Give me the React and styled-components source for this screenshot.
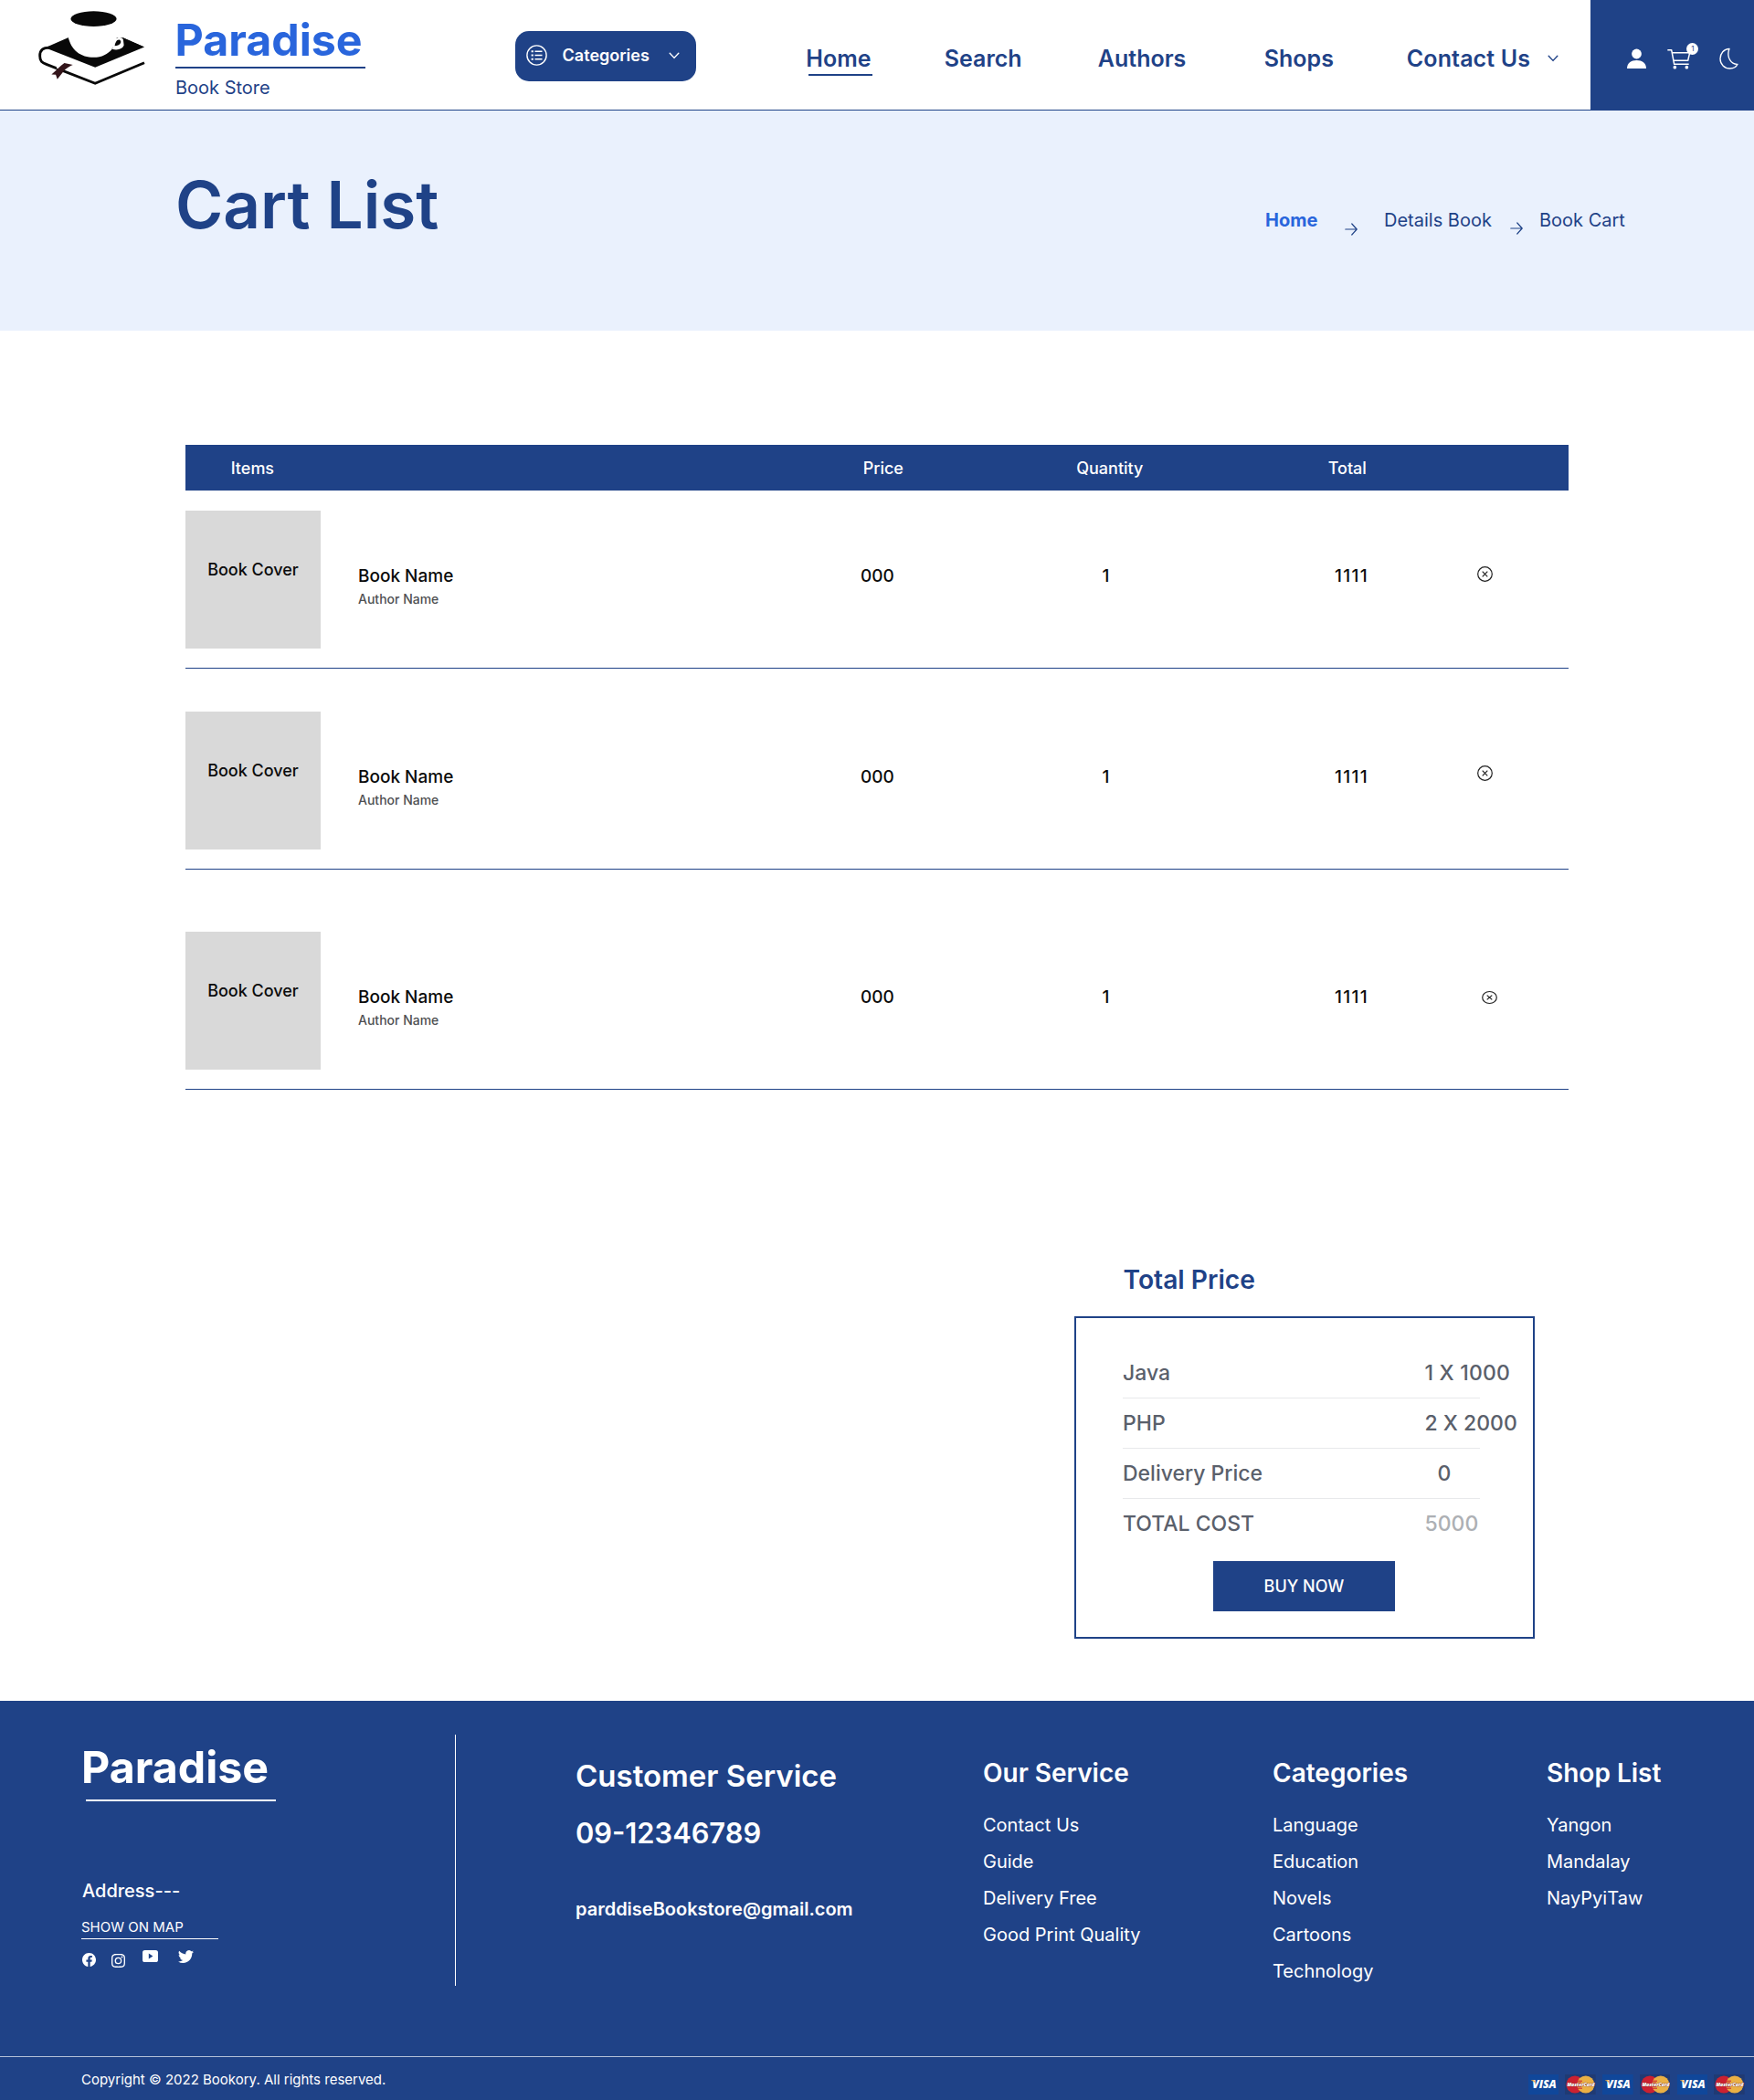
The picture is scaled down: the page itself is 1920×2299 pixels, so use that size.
import React from "react";
import styled, { createGlobalStyle } from "styled-components";
import { BsFacebook, BsInstagram, BsTwitter } from "react-icons/bs";

const navy = "#1f4287";

const GlobalStyle = createGlobalStyle`
  * { box-sizing: border-box; }
  body { margin: 0; background: #fff; }
  h1, h2, h3, p, ul { margin: 0; padding: 0; font-weight: inherit; }
  ul { list-style: none; }
  svg { display: block; }
  button { border: 0; margin: 0; padding: 0; font-family: inherit; background: none; }
`;

const Page = styled.div`
  width: 1920px;
  font-family: Inter, "Liberation Sans", sans-serif;
  color: ${navy};
  white-space: nowrap;
`;

/* ---------- header ---------- */
const Header = styled.header`
  display: flex;
  align-items: flex-start;
  height: 121px;
  padding-left: 42px;
  border-bottom: 1px solid ${navy};
`;
const LogoMark = styled.svg`
  width: 117px;
  height: 81px;
  margin-top: 12px;
  flex: none;
`;
const Brand = styled.div`
  width: 208px;
  margin: 14px 0 0 33px;
`;
const BrandName = styled.div`
  margin-left: -0.5px;
  font-size: 48.3px;
  font-weight: 700;
  line-height: 59px;
  color: #2965dc;
`;
const BrandTag = styled.div`
  padding-top: 9px;
  border-top: 2px solid ${navy};
  font-size: 20px;
  line-height: 24px;
`;
const CategoryButton = styled.button`
  display: flex;
  align-items: center;
  width: 199px;
  height: 54.6px;
  margin: 34px 0 0 164px;
  padding: 0 0 1px 12px;
  border-radius: 15px;
  background: ${navy};
  color: #fff;
  font-size: 18px;
  font-weight: 600;
  svg:last-child { margin-left: 21px; }
`;
const CategoryLabel = styled.span`
  width: 95px;
  margin-left: 17px;
`;
const Nav = styled.nav`
  display: grid;
  grid-template-columns: 151.5px 168px 182px 156px 201.5px;
  margin: 49px 0 0 120px;
  font-size: 25px;
  font-weight: 600;
  line-height: 30px;
`;
const NavItem = styled.a`
  display: flex;
  align-items: center;
  align-self: start;
  gap: 19px;
  height: 30px;
  letter-spacing: ${(p) => p.$track || 0}px;
`;
const ActiveItem = styled.a`
  &::after {
    content: "";
    display: block;
    width: 70px;
    height: 2px;
    margin: 2px 0 0 3px;
    background: ${navy};
  }
`;
const Account = styled.div`
  display: flex;
  align-items: flex-start;
  width: 179px;
  height: 120px;
  padding: 46px 0 0 40px;
  background: ${navy};
`;
const UserSlot = styled.div`
  margin: 7px 23px 0 0;
`;
const CartSlot = styled.div`
  position: relative;
  margin-right: 22px;
`;
const MoonSlot = styled.div`
  margin-top: 6px;
`;
const Badge = styled.span`
  position: absolute;
  top: 1px;
  left: 21px;
  width: 13px;
  height: 13px;
  border-radius: 50%;
  background: #fff;
  color: ${navy};
  font-size: 8px;
  line-height: 13px;
  text-align: center;
`;

/* ---------- hero ---------- */
const Hero = styled.section`
  display: flex;
  align-items: flex-start;
  height: 241px;
  padding: 60px 0 0 192px;
  background: #eaf1fd;
`;
const Title = styled.h1`
  width: 1193px;
  font-size: 71px;
  font-weight: 600;
  line-height: 86px;
`;
const Crumbs = styled.div`
  display: grid;
  grid-template-columns: 87px 43px 138px 32px auto;
  margin-top: 47.5px;
  font-size: 20px;
  line-height: 24px;
`;
const CrumbHome = styled.a`
  font-weight: 700;
  color: #2965dc;
`;
const CrumbArrow = styled.svg`
  width: 14px;
  height: 14px;
  margin-top: ${(p) => p.$drop}px;
`;

/* ---------- cart table ---------- */
const Cart = styled.section`
  width: 1514px;
  margin: 125px 0 0 203px;
`;
const HeadRow = styled.div`
  display: grid;
  grid-template-columns: 692px 233.5px 275.5px auto;
  height: 50px;
  padding-left: 49.7px;
  background: ${navy};
  color: #fff;
  font-size: 18px;
  font-weight: 500;
  line-height: 51px;
`;
const ItemRow = styled.div`
  display: grid;
  grid-template-columns: 189px 550px 264.5px 254.5px 156px auto;
  align-items: start;
  height: 173px;
  margin-top: ${(p) => p.$gap}px;
  border-bottom: 1px solid ${navy};
  color: #0b0b0b;
`;
const Cover = styled.div`
  width: 148px;
  height: 150.5px;
  padding-top: 53.5px;
  background: #d9d9d9;
  font-size: 18px;
  font-weight: 500;
  line-height: 22px;
  text-align: center;
`;
const ItemText = styled.div`
  padding-top: 60px;
  font-size: 19px;
  font-weight: 500;
  line-height: 24px;
  letter-spacing: ${(p) => p.$track || 0}px;
`;
const Author = styled.div`
  margin-top: 4px;
  font-size: 14px;
  line-height: 18px;
  color: #4f5052;
`;
const RemoveButton = styled.button`
  width: 17px;
  margin: ${(p) => p.$top}px 0 0 ${(p) => p.$left}px;
`;

/* ---------- price summary ---------- */
const Summary = styled.section`
  width: 504px;
  margin: 191px 0 68px 1176px;
`;
const SummaryTitle = styled.h2`
  margin: 0 0 23px 53.5px;
  font-size: 28.2px;
  font-weight: 600;
  line-height: 34px;
`;
const SummaryBox = styled.div`
  height: 353px;
  padding: 33px 0 0 51px;
  border: 2px solid ${navy};
`;
const PriceRow = styled.div`
  display: grid;
  grid-template-columns: 330.5px auto;
  width: 391px;
  height: 55px;
  border-bottom: 1px solid ${(p) => (p.$last ? "transparent" : "#e8e9eb")};
  color: #5a606b;
  font-size: 23px;
  font-weight: 500;
  line-height: 54px;
`;
const PriceValue = styled.span`
  padding-left: ${(p) => p.$indent || 0}px;
  letter-spacing: ${(p) => p.$track || 0}px;
  color: ${(p) => (p.$muted ? "#adb0b4" : "inherit")};
`;
const BuyButton = styled.button`
  display: block;
  width: 199px;
  height: 54.6px;
  margin: 13px 0 0 99px;
  background: ${navy};
  color: #fff;
  font-size: 18px;
  font-weight: 500;
`;

/* ---------- footer ---------- */
const Footer = styled.footer`
  height: 437px;
  background: ${navy};
  color: #fff;
`;
const FooterMain = styled.div`
  display: grid;
  grid-template-columns: 498px 132px 446px 317px 300px auto;
  align-items: start;
  height: 390px;
  border-bottom: 1px solid #b4c0d8;
`;
const FooterBrand = styled.div`
  padding: 43px 0 0 89px;
`;
const FooterName = styled.div`
  font-size: 48.3px;
  font-weight: 700;
  line-height: 59px;
`;
const NameRule = styled.div`
  width: 208px;
  height: 2px;
  margin: 6px 0 0 5px;
  background: #fff;
`;
const Address = styled.div`
  margin: 86px 0 0 1px;
  font-size: 20px;
  font-weight: 500;
  line-height: 24px;
`;
const MapLink = styled.a`
  display: block;
  width: 150px;
  height: 24px;
  margin-top: 17px;
  border-bottom: 1px solid #fff;
  font-size: 15px;
  font-weight: 400;
  line-height: 21px;
`;
const Socials = styled.div`
  display: flex;
  align-items: flex-start;
  margin: 10px 0 0 1px;
`;
const Social = styled.a`
  width: ${(p) => p.$width}px;
  padding-top: ${(p) => p.$drop}px;
`;
const Divider = styled.div`
  width: 1px;
  height: 275px;
  margin-top: 37px;
  background: #fff;
`;
const Contact = styled.div`
  padding-top: 62px;
  font-weight: 600;
`;
const ContactTitle = styled.h3`
  font-size: 33px;
  line-height: 40px;
`;
const Phone = styled.p`
  margin-top: 24px;
  font-size: 30.8px;
  line-height: 38px;
`;
const Email = styled.p`
  margin-top: 51.5px;
  font-size: 20px;
  line-height: 24px;
`;
const LinkColumn = styled.div`
  padding-top: 62px;
`;
const LinkTitle = styled.h3`
  margin-bottom: 20px;
  font-size: 28px;
  font-weight: 600;
  line-height: 34px;
`;
const FooterLink = styled.li`
  font-size: 20px;
  line-height: 40px;
`;
const FooterBar = styled.div`
  display: flex;
  justify-content: space-between;
  align-items: flex-start;
  height: 47px;
  padding: 16px 10px 0 89px;
`;
const Copyright = styled.p`
  font-size: 15px;
  line-height: 18px;
`;
const Cards = styled.div`
  display: flex;
  gap: 7.2px;
  margin-top: 3px;
`;
const CardMark = styled.svg`
  width: 33.6px;
  height: 22px;
`;

/* ---------- drawings ---------- */
const Logo = () => (
  <LogoMark viewBox="66 36 350 244" preserveAspectRatio="none">
    <ellipse cx="247" cy="62" rx="75" ry="25" fill="#080808" />
    <path d="M165 123 L88 157 L252 222 L413 155 L343 124 Z" fill="#080808" />
    <path d="M163 118 C172 166 205 189 247 189 C274 189 294 177 306 163 C316 148 321 136 324 118 Z" fill="#fff" />
    <path d="M317 130 C335 114 352 130 347 147 C342 162 325 167 308 162 Z" fill="#fff" />
    <path d="M343 124 L413 155 L346 148 Z" fill="#080808" />
    <path d="M316 151 C318 138 325 128 333 132 C341 139 333 151 316 151 Z" fill="#080808" />
    <path d="M108 157 C80 155 71 166 71 184 C71 202 78 207 92 212 L252 275 L413 207" fill="none" stroke="#080808" strokeWidth="8.5" />
    <path d="M127 219 L137 223" stroke="#fff" strokeWidth="12" />
    <path d="M151 208 L179 214 C163 221 154 228 144 241 L128 261 L123 246 L109 245 C126 232 136 218 151 208 Z" fill="#33151a" />
  </LogoMark>
);

const ListIcon = () => (
  <svg width="23" height="23" viewBox="0 0 23 23" fill="none" stroke="#fff">
    <circle cx="11.5" cy="11.5" r="10.6" strokeWidth="1.4" />
    <path d="M9.5 7.2H17.5M9.5 11.5H17.5M9.5 15.8H17.5" strokeWidth="1.5" />
    <path d="M5.6 7.2H7.8M5.6 11.5H7.8M5.6 15.8H7.8" strokeWidth="2" />
  </svg>
);

const Chevron = ({ color }) => (
  <svg width="12" height="8" viewBox="0 0 12 8" fill="none" stroke={color} strokeWidth="1.4" strokeLinecap="round" strokeLinejoin="round">
    <path d="M1.2 1.2 L6 6.4 L10.8 1.2" />
  </svg>
);

const UserIcon = () => (
  <svg width="21" height="22" viewBox="0 0 21 22" fill="#fff">
    <circle cx="10.5" cy="6" r="5.4" />
    <path d="M0 22 C0 16 4.5 13 10.5 13 S21 16 21 22 Z" />
  </svg>
);

const CartIcon = () => (
  <svg width="35" height="31" viewBox="315 78 105 93" fill="none" stroke="#fff" strokeWidth="4.5" strokeLinejoin="round">
    <path d="M316 104 H329 L338 151 H386" />
    <path d="M331 113 H389 L383 139 H336" />
    <circle cx="340" cy="161" r="5.5" fill="#fff" stroke="none" />
    <circle cx="379" cy="161" r="5.5" fill="#fff" stroke="none" />
  </svg>
);

const MoonIcon = () => (
  <svg width="21" height="24" viewBox="487 96 63 72" fill="none" stroke="#fff" strokeWidth="4" strokeLinejoin="round">
    <path d="M520 100 C502 101 490 115 490 133 C490 151 504 165 522 165 C533 165 543 160 547 151 C527 152 509 130 520 100 Z" />
  </svg>
);

const Arrow = ({ drop }) => (
  <CrumbArrow $drop={drop} viewBox="0 0 14 14" fill="none" stroke={navy} strokeWidth="1.2" strokeLinecap="round" strokeLinejoin="round">
    <path d="M0.8 7 H13 M7.8 1 L13.2 7 L7.8 13" />
  </CrumbArrow>
);

const RemoveIcon = ({ height }) => (
  <svg width="17" height={height} viewBox="0 0 17 17" preserveAspectRatio="none" fill="none" stroke="#222" strokeWidth="1.2">
    <circle cx="8.5" cy="8.5" r="7.8" />
    <path d="M5.7 5.7 L11.3 11.3 M11.3 5.7 L5.7 11.3" />
  </svg>
);

const YoutubeIcon = () => (
  <svg width="17" height="13" viewBox="0 0 17 13">
    <rect width="17" height="13" rx="2.6" fill="#fff" />
    <path d="M6.8 3.5 L11.4 6.5 L6.8 9.5 Z" fill={navy} />
  </svg>
);

const Visa = () => (
  <CardMark viewBox="0 0 33.6 22">
    <rect width="33.6" height="22" fill="#10479a" />
    <text x="4.2" y="15.4" fill="#fff" fontFamily="Open Sans, sans-serif" fontSize="12" fontWeight="800" fontStyle="italic" textLength="26.5" lengthAdjust="spacingAndGlyphs">VISA</text>
    <path d="M3 6.2 H6.4 L8 10.2 C7 8.6 5.4 7.3 3 6.6 Z" fill="#eda63a" />
  </CardMark>
);

const MasterCard = () => (
  <CardMark viewBox="0 0 33.6 22">
    <rect width="33.6" height="22" fill="#203a73" />
    <circle cx="11" cy="11" r="9.6" fill="#cc2131" />
    <circle cx="22.8" cy="11" r="9.6" fill="#eab044" />
    <path d="M14 7.2H19M13.4 9.2H18M13.4 13.2H18M14 15.2H19" stroke="#cc2131" strokeWidth="1" />
    <text x="2.4" y="13" fill="#fff" stroke="#7b3030" strokeWidth="0.7" paintOrder="stroke" fontFamily="Open Sans, sans-serif" fontSize="5.2" fontWeight="800" fontStyle="italic">MasterCard</text>
  </CardMark>
);

/* ---------- data ---------- */
const items = [
  { gap: 22, top: 61, left: 0, iconHeight: 17 },
  { gap: 47, top: 59, left: 0, iconHeight: 17 },
  { gap: 68, top: 65, left: 5, iconHeight: 14 },
];

const prices = [
  { label: "Java", value: "1 X 1000", track: 0.2 },
  { label: "PHP", value: "2 X 2000" },
  { label: "Delivery Price", value: "0", indent: 14 },
  { label: "TOTAL COST", value: "5000", muted: true },
];

const linkColumns = [
  { title: "Our Service", links: ["Contact Us", "Guide", "Delivery Free", "Good Print Quality"] },
  { title: "Categories", links: ["Language", "Education", "Novels", "Cartoons", "Technology"] },
  { title: "Shop List", links: ["Yangon", "Mandalay", "NayPyiTaw"] },
];

export default function App() {
  return (
    <Page>
      <GlobalStyle />
      <Header>
        <Logo />
        <Brand>
          <BrandName>Paradise</BrandName>
          <BrandTag>Book Store</BrandTag>
        </Brand>
        <CategoryButton>
          <ListIcon />
          <CategoryLabel>Categories</CategoryLabel>
          <Chevron color="#fff" />
        </CategoryButton>
        <Nav>
          <ActiveItem>Home</ActiveItem>
          <NavItem>Search</NavItem>
          <NavItem>Authors</NavItem>
          <NavItem>Shops</NavItem>
          <NavItem $track={0.12}>
            Contact Us
            <Chevron color={navy} />
          </NavItem>
        </Nav>
        <Account>
          <UserSlot><UserIcon /></UserSlot>
          <CartSlot>
            <CartIcon />
            <Badge>1</Badge>
          </CartSlot>
          <MoonSlot><MoonIcon /></MoonSlot>
        </Account>
      </Header>

      <Hero>
        <Title>Cart List</Title>
        <Crumbs>
          <CrumbHome>Home</CrumbHome>
          <Arrow drop={15.5} />
          <span>Details Book</span>
          <Arrow drop={14.5} />
          <span>Book Cart</span>
        </Crumbs>
      </Hero>

      <Cart>
        <HeadRow>
          <span>Items</span>
          <span>Price</span>
          <span>Quantity</span>
          <span>Total</span>
        </HeadRow>
        {items.map((item, i) => (
          <ItemRow key={i} $gap={item.gap}>
            <Cover>Book Cover</Cover>
            <ItemText>
              Book Name
              <Author>Author Name</Author>
            </ItemText>
            <ItemText>000</ItemText>
            <ItemText>1</ItemText>
            <ItemText $track={1.4}>1111</ItemText>
            <RemoveButton $top={item.top} $left={item.left}>
              <RemoveIcon height={item.iconHeight} />
            </RemoveButton>
          </ItemRow>
        ))}
      </Cart>

      <Summary>
        <SummaryTitle>Total Price</SummaryTitle>
        <SummaryBox>
          {prices.map((row, i) => (
            <PriceRow key={row.label} $last={i === prices.length - 1}>
              <span>{row.label}</span>
              <PriceValue $indent={row.indent} $muted={row.muted} $track={row.track}>{row.value}</PriceValue>
            </PriceRow>
          ))}
          <BuyButton>BUY NOW</BuyButton>
        </SummaryBox>
      </Summary>

      <Footer>
        <FooterMain>
          <FooterBrand>
            <FooterName>Paradise</FooterName>
            <NameRule />
            <Address>Address---</Address>
            <MapLink>SHOW ON MAP</MapLink>
            <Socials>
              <Social $width={32} $drop={5}><BsFacebook size={15} /></Social>
              <Social $width={34} $drop={6}><BsInstagram size={15} /></Social>
              <Social $width={39} $drop={2}><YoutubeIcon /></Social>
              <Social $width={17} $drop={0}><BsTwitter size={17} /></Social>
            </Socials>
          </FooterBrand>
          <Divider />
          <Contact>
            <ContactTitle>Customer Service</ContactTitle>
            <Phone>09-12346789</Phone>
            <Email>parddiseBookstore@gmail.com</Email>
          </Contact>
          {linkColumns.map((column) => (
            <LinkColumn key={column.title}>
              <LinkTitle>{column.title}</LinkTitle>
              <ul>
                {column.links.map((link) => (
                  <FooterLink key={link}>{link}</FooterLink>
                ))}
              </ul>
            </LinkColumn>
          ))}
        </FooterMain>
        <FooterBar>
          <Copyright>Copyright © 2022 Bookory. All rights reserved.</Copyright>
          <Cards>
            <Visa /><MasterCard />
            <Visa /><MasterCard />
            <Visa /><MasterCard />
          </Cards>
        </FooterBar>
      </Footer>
    </Page>
  );
}
